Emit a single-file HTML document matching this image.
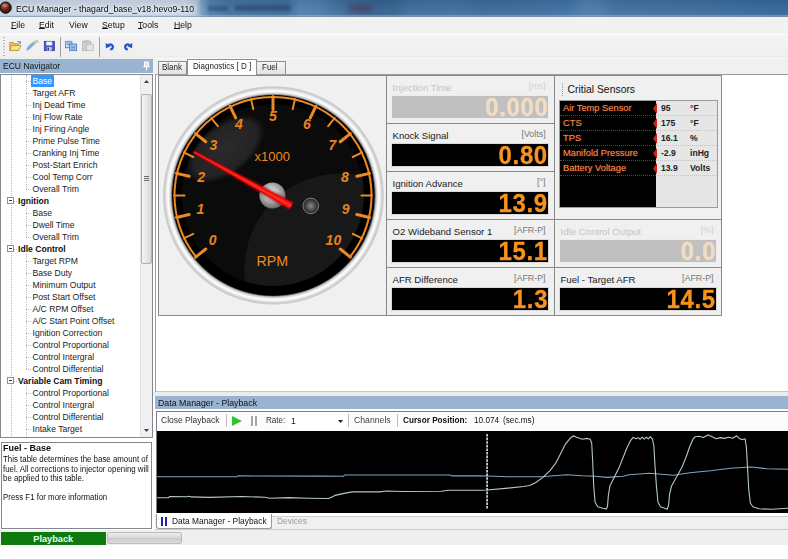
<!DOCTYPE html>
<html><head><meta charset="utf-8"><title>ECU Manager</title>
<style>
*{box-sizing:border-box;margin:0;padding:0}
html,body{width:788px;height:559px;overflow:hidden;background:#fff}
body{font-family:"Liberation Sans",sans-serif;font-size:8.8px;color:#111;position:relative}
.a{position:absolute}
.t{position:absolute;white-space:nowrap;line-height:1}
u{text-decoration:underline;text-underline-offset:.3px}
.sx{transform:scaleX(.93);transform-origin:0 50%}
#title{left:0;top:0;width:788px;height:17px;background:linear-gradient(180deg,rgba(0,0,0,.06),rgba(255,255,255,.07)),linear-gradient(90deg,#c4d2e5 0,#cad6e7 60px,#c8d4e6 185px,#b4c6dd 196px,#7a9cc3 202px,#4f7eaf 210px,#42719f 230px,#3d6c9b 285px,#4f80ae 300px,#4d7dab 320px,#41709f 335px,#3a6897 350px,#33618f 376px,#35638f 395px,#3d6d9d 410px,#3f70a1 456px,#3a6a9b 480px,#3e70a2 565px,#4c7cab 585px,#4a7aaa 600px,#4070a1 615px,#3c6d9e 700px,#33659a 788px)}
#title:after{content:"";position:absolute;left:0;right:0;bottom:0;height:2px;background:linear-gradient(180deg,rgba(255,255,255,.25),rgba(120,140,165,.9))}
#menubar{left:0;top:17px;width:788px;height:16px;background:#f1f1f1}
#toolbar{left:0;top:33px;width:788px;height:26px;background:linear-gradient(180deg,#f4f4f4,#eee)}
.sep{position:absolute;width:1px;background:#a0a0a0}
#navhead{left:0;top:59px;width:153px;height:14px;background:#99b4d1}
#tree{left:0;top:74px;width:153px;height:364px;background:#fff;border:1px solid #828790;overflow:hidden}
.ti{position:absolute;white-space:nowrap;line-height:12px;height:12px;font-size:8.600px;color:#222}
.ti.c{left:31.500px}
.ti.g{left:17px;font-weight:bold;color:#111}
.vd{position:absolute;width:0;border-left:1px dotted #b8b8b8}
.hd{position:absolute;height:0;border-top:1px dotted #b8b8b8}
.bx{position:absolute;left:6px;width:7px;height:7px;border:1px solid #919191;background:#fff}
.bx:after{content:"";position:absolute;left:1px;top:2px;width:3px;height:1px;background:#333}
#desc{left:1px;top:442px;width:151px;height:87px;background:#fff;border:1px solid #828790;font-size:8.480px;line-height:9.550px;color:#111;padding:1.600px 0 0 1px;white-space:nowrap;overflow:hidden}
#status{left:0;top:530px;width:788px;height:14.800px;background:#f0efee}
#tabstrip{left:153px;top:59px;width:635px;height:16px;background:#f0f0f0}
.tab{position:absolute;border:1px solid #8e8e8e;border-bottom:none;background:linear-gradient(180deg,#f4f4f4,#e2e2e2);font-size:8.600px;text-align:center;white-space:nowrap;color:#222}
.nx{display:inline-block;transform:scaleX(.93);transform-origin:0 50%}
#tabbody{left:155px;top:74px;width:640px;height:318px;background:#fff;border:1px solid #9a9ca0;border-bottom-color:#c4c4c4}
#dm{left:155px;top:396px;width:633px;height:133px}
.pnl{position:absolute;background:#f0f0f0;border:1px solid #888}
.lbl{position:absolute;white-space:nowrap;font-size:9.600px;line-height:1;color:#1a1a1a}
.unit{position:absolute;white-space:nowrap;font-size:8.900px;line-height:1;color:#777;text-align:right}
.bar{position:absolute;height:24px;background:#000;border:1px solid #d8d8d8;color:#f7921e;font-weight:bold;font-size:25.200px;text-align:right;line-height:23px;overflow:hidden;padding-right:.5px}
.dg{display:inline-block;transform:scale(.95,1.05);transform-origin:100% 82%;letter-spacing:.7px;margin-right:-.7px;-webkit-text-stroke:.3px currentColor}
.dis .lbl{color:#c4c4c4}.dis .unit{color:#d2d2d2}
.dis .bar{background:#c0c0c0;color:#f3dcc3;border-color:#ececec}
.ic{transform:scale(.88)}
</style></head><body>
<div id="title" class="a">
<svg class="a" style="left:0;top:0" width="17" height="17" viewBox="0 0 17 17"><defs><radialGradient id="ig" cx="40%" cy="35%" r="65%"><stop offset="0" stop-color="#b5604a"/><stop offset=".5" stop-color="#6b2a1e"/><stop offset="1" stop-color="#2a0f0b"/></radialGradient></defs><circle cx="5.600" cy="7.6" r="5.800" fill="url(#ig)"/><circle cx="5.600" cy="7.6" r="5.600" fill="none" stroke="#1c0c0a" stroke-width="1"/><ellipse cx="5" cy="5.400" rx="2.800" ry="1.600" fill="#e0a890" opacity=".45"/></svg>
<div class="a" style="left:208px;top:6px;width:20px;height:5px;background:rgba(20,45,80,.4);filter:blur(1.500px)"></div><div class="a" style="left:235px;top:5px;width:56px;height:6px;background:rgba(20,45,80,.4);filter:blur(1.500px)"></div><div class="a" style="left:349px;top:4px;width:23px;height:9px;background:rgba(85,35,60,.38);filter:blur(2.500px)"></div>
<span class="t sx" style="left:16.2px;top:4px;font-size:9.400px;color:#0a0a0a;text-shadow:0 0 4px #fff,0 0 6px #fff">ECU Manager - thagard_base_v18.hevo9-110</span>
</div>
<div id="menubar" class="a">
<span class="t sx" style="left:11.4px;top:4.1px;font-size:9.350px"><u>F</u>ile</span>
<span class="t sx" style="left:39.3px;top:4.1px;font-size:9.350px"><u>E</u>dit</span>
<span class="t sx" style="left:68.5px;top:4.1px;font-size:9.350px">View</span>
<span class="t sx" style="left:101.5px;top:4.1px;font-size:9.350px"><u>S</u>etup</span>
<span class="t sx" style="left:138.3px;top:4.1px;font-size:9.350px"><u>T</u>ools</span>
<span class="t sx" style="left:174.4px;top:4.1px;font-size:9.350px"><u>H</u>elp</span>
</div>
<div id="toolbar" class="a">
<div class="a" style="left:3px;top:4px;width:2px;height:19px;background:repeating-linear-gradient(180deg,#b5b5b5 0 1px,transparent 1px 3px)"></div>
<svg class="a ic" style="left:8px;top:6px" width="15" height="13" viewBox="0 0 15 13"><path d="M1 3h4l1 1.5h5v7.5H1z" fill="#e9c45a" stroke="#a98420" stroke-width=".8"/><path d="M3.2 6.5h10.5l-2.5 5.5H1z" fill="#fbe38a" stroke="#b08a25" stroke-width=".8"/><path d="M9 2.2c1.5-1.5 3.3-1 4 .3l.8-.6-.2 2.5-2.4-.6.9-.6c-.6-.9-1.800-1.100-2.700-.4z" fill="#3a76c4"/></svg>
<svg class="a ic" style="left:25px;top:6px" width="15" height="13" viewBox="0 0 15 13"><path d="M1 12c.5-3 2-5.500 5-7.500l3-1.500 1 1.500-2.500 2.500C5.500 9.500 3.500 11 1 12z" fill="#8fb0d8" stroke="#5f7fa8" stroke-width=".6"/><path d="M8 2.500l4.500-1.800 1.500 1.300-4.500 2.500z" fill="#e6d38a" stroke="#9a8a4a" stroke-width=".5"/></svg>
<svg class="a ic" style="left:43px;top:7px" width="13" height="12" viewBox="0 0 13 12"><rect x=".5" y=".5" width="11.500" height="11" fill="#4a58c8" stroke="#2a3290" stroke-width=".9"/><rect x="2.800" y="1" width="6.800" height="4.300" fill="#f2f2fa"/><rect x="3.500" y="7.300" width="5.500" height="4" fill="#c9cde8"/><rect x="4.300" y="8" width="1.600" height="2.800" fill="#2a3290"/></svg>
<div class="sep" style="left:60px;top:4px;height:20px"></div>
<svg class="a ic" style="left:64px;top:7px" width="14" height="12" viewBox="0 0 14 12"><rect x=".5" y=".5" width="7.500" height="7.500" fill="#c9dcf4" stroke="#4f7cc0" stroke-width="1"/><path d="M2 2.500h4.500M2 4.200h4.500" stroke="#5d8ad0" stroke-width=".9"/><rect x="5.500" y="3.800" width="7.800" height="7.700" fill="#bcd4f2" stroke="#3f6fb8" stroke-width="1"/><path d="M7 6.200h4.800M7 7.900h4.800M7 9.600h4.800" stroke="#4a7ccc" stroke-width=".9"/></svg>
<svg class="a ic" style="left:81px;top:6px" width="14" height="13" viewBox="0 0 14 13"><rect x=".7" y="1.700" width="9.500" height="10.500" fill="#cfcfcf" stroke="#b4b4b4" stroke-width=".9"/><rect x="3" y=".5" width="5" height="2.500" fill="#bdbdbd"/><rect x="5.500" y="5" width="7.500" height="7.500" fill="#e4e4e4" stroke="#b9b9b9" stroke-width=".9"/></svg>
<div class="sep" style="left:99px;top:4px;height:20px"></div>
<svg class="a" style="left:105px;top:8px;transform:scale(.92)" width="10" height="10" viewBox="0 0 10 10"><path d="M2.800 4.600C4.200 2.600 7 2.700 7.900 4.900 8.600 6.900 7.400 8.600 5.200 9.100" fill="none" stroke="#2553c4" stroke-width="2.500"/><path d="M0 1.500l.5 6 5.300-2.300z" fill="#2553c4"/></svg>
<svg class="a ic" style="left:123px;top:8px;transform:scale(-.92,.92)" width="10" height="10" viewBox="0 0 10 10"><path d="M2.800 4.600C4.200 2.600 7 2.700 7.900 4.900 8.600 6.900 7.400 8.600 5.200 9.100" fill="none" stroke="#2553c4" stroke-width="2.500"/><path d="M0 1.500l.5 6 5.300-2.300z" fill="#2553c4"/></svg>
</div>
<div class="a" style="left:0;top:33.500px;width:788px;height:1px;background:#fbfbfb"></div><div class="a" style="left:153px;top:58px;width:635px;height:1px;background:#fafafa"></div>
<div id="tabstrip" class="a">
<div class="tab" style="left:4.500px;top:2px;width:29.500px;height:13px;line-height:11.500px;text-align:left;padding-left:3.500px"><span class="nx">Blank</span></div>
<div class="tab" style="left:103px;top:2px;width:30px;height:13px;line-height:11.500px;text-align:left;padding-left:4.500px"><span class="nx">Fuel</span></div>
<div class="tab" style="left:33.500px;top:0px;width:70.500px;height:16px;line-height:13.500px;background:#fff;z-index:3;text-align:left;padding-left:5.500px"><span class="nx">Diagnostics [ D ]</span></div>
</div>
<div id="navhead" class="a"><span class="t sx" style="left:2.6px;top:3.4px;font-size:9.200px;color:#111">ECU Navigator</span>
<svg class="a" style="left:143px;top:2px" width="7" height="10" viewBox="0 0 7 10"><path d="M1.500 1h4v4.500h-4zM0.300 5.800h6.400M3.500 6v3.500" fill="#d9e6f5" stroke="#fff" stroke-width="1.100"/></svg></div>
<div id="tree" class="a">
<div class="vd" style="left:9.7px;top:0;height:365px"></div>
<div class="vd" style="left:24.5px;top:0px;height:113.6px"></div>
<div class="vd" style="left:24.5px;top:130.6px;height:31.0px"></div>
<div class="vd" style="left:24.5px;top:178.6px;height:115.00000000000003px"></div>
<div class="vd" style="left:24.5px;top:310.6px;height:55.0px"></div>
<div class="hd" style="left:25px;top:5.599999999999994px;width:5px"></div>
<div class="a" style="left:29.5px;top:-0.4000000000000057px;width:23px;height:12px;background:#3399ff"></div>
<div class="ti c" style="top:-0.4px;color:#fff">Base</div>
<div class="hd" style="left:25px;top:17.599999999999994px;width:5px"></div>
<div class="ti c" style="top:11.6px">Target AFR</div>
<div class="hd" style="left:25px;top:29.599999999999994px;width:5px"></div>
<div class="ti c" style="top:23.6px">Inj Dead Time</div>
<div class="hd" style="left:25px;top:41.599999999999994px;width:5px"></div>
<div class="ti c" style="top:35.6px">Inj Flow Rate</div>
<div class="hd" style="left:25px;top:53.599999999999994px;width:5px"></div>
<div class="ti c" style="top:47.6px">Inj Firing Angle</div>
<div class="hd" style="left:25px;top:65.6px;width:5px"></div>
<div class="ti c" style="top:59.6px">Prime Pulse Time</div>
<div class="hd" style="left:25px;top:77.6px;width:5px"></div>
<div class="ti c" style="top:71.6px">Cranking Inj Time</div>
<div class="hd" style="left:25px;top:89.6px;width:5px"></div>
<div class="ti c" style="top:83.6px">Post-Start Enrich</div>
<div class="hd" style="left:25px;top:101.6px;width:5px"></div>
<div class="ti c" style="top:95.6px">Cool Temp Corr</div>
<div class="hd" style="left:25px;top:113.6px;width:5px"></div>
<div class="ti c" style="top:107.6px">Overall Trim</div>
<div class="bx" style="top:122.1px"></div>
<div class="hd" style="left:13px;top:125.6px;width:3px"></div>
<div class="ti g" style="top:119.6px">Ignition</div>
<div class="hd" style="left:25px;top:137.6px;width:5px"></div>
<div class="ti c" style="top:131.6px">Base</div>
<div class="hd" style="left:25px;top:149.6px;width:5px"></div>
<div class="ti c" style="top:143.6px">Dwell Time</div>
<div class="hd" style="left:25px;top:161.6px;width:5px"></div>
<div class="ti c" style="top:155.6px">Overall Trim</div>
<div class="bx" style="top:170.1px"></div>
<div class="hd" style="left:13px;top:173.6px;width:3px"></div>
<div class="ti g" style="top:167.6px">Idle Control</div>
<div class="hd" style="left:25px;top:185.6px;width:5px"></div>
<div class="ti c" style="top:179.6px">Target RPM</div>
<div class="hd" style="left:25px;top:197.60000000000002px;width:5px"></div>
<div class="ti c" style="top:191.6px">Base Duty</div>
<div class="hd" style="left:25px;top:209.60000000000002px;width:5px"></div>
<div class="ti c" style="top:203.6px">Minimum Output</div>
<div class="hd" style="left:25px;top:221.60000000000002px;width:5px"></div>
<div class="ti c" style="top:215.6px">Post Start Offset</div>
<div class="hd" style="left:25px;top:233.60000000000002px;width:5px"></div>
<div class="ti c" style="top:227.6px">A/C RPM Offset</div>
<div class="hd" style="left:25px;top:245.60000000000002px;width:5px"></div>
<div class="ti c" style="top:239.6px">A/C Start Point Offset</div>
<div class="hd" style="left:25px;top:257.6px;width:5px"></div>
<div class="ti c" style="top:251.6px">Ignition Correction</div>
<div class="hd" style="left:25px;top:269.6px;width:5px"></div>
<div class="ti c" style="top:263.6px">Control Proportional</div>
<div class="hd" style="left:25px;top:281.6px;width:5px"></div>
<div class="ti c" style="top:275.6px">Control Intergral</div>
<div class="hd" style="left:25px;top:293.6px;width:5px"></div>
<div class="ti c" style="top:287.6px">Control Differential</div>
<div class="bx" style="top:302.1px"></div>
<div class="hd" style="left:13px;top:305.6px;width:3px"></div>
<div class="ti g" style="top:299.6px">Variable Cam Timing</div>
<div class="hd" style="left:25px;top:317.6px;width:5px"></div>
<div class="ti c" style="top:311.6px">Control Proportional</div>
<div class="hd" style="left:25px;top:329.6px;width:5px"></div>
<div class="ti c" style="top:323.6px">Control Intergral</div>
<div class="hd" style="left:25px;top:341.6px;width:5px"></div>
<div class="ti c" style="top:335.6px">Control Differential</div>
<div class="hd" style="left:25px;top:353.6px;width:5px"></div>
<div class="ti c" style="top:347.6px">Intake Target</div>
<div class="hd" style="left:25px;top:365.6px;width:5px"></div>
<div class="ti c" style="top:359.6px">Exhaust Target</div>
<div class="a" style="left:139px;top:0;width:12px;height:363px;background:#f0f0f0;border-left:1px solid #e3e3e3"></div>
<div class="a" style="left:139.500px;top:19px;width:11.500px;height:170px;border:1px solid #b2b2b2;border-radius:2px;background:linear-gradient(90deg,#f4f4f4,#e8e8e8 50%,#d6d6d6)"></div>
<div class="a" style="left:143px;top:101px;width:5px;height:5px;background:repeating-linear-gradient(180deg,#6a6a6a 0 1px,transparent 1px 2px)"></div>
<svg class="a" style="left:142.500px;top:5px" width="5" height="3" viewBox="0 0 5 3"><path d="M0 3L2.500 0 5 3z" fill="#404040"/></svg>
<svg class="a" style="left:142.500px;top:354px" width="5" height="3" viewBox="0 0 5 3"><path d="M0 0L2.500 3 5 0z" fill="#404040"/></svg>
</div>
<div id="desc" class="a"><div class="nx"><b style="font-size:9.7px;position:relative;top:-1.300px">Fuel - Base</b><br>This table determines the base amount of<br>fuel. All corrections to injector opening will<br>be applied to this table.<br><br>Press F1 for more information</div></div>
<div id="tabbody" class="a">
<div class="pnl" style="left:2px;top:0px;width:229px;height:241px"></div>
<div class="a" style="left:-8.4px;top:-4.6px;width:250px;height:250px"><svg width="250" height="250" viewBox="0 0 250 250"><defs><radialGradient id="bz" cx="50%" cy="50%" r="50%"><stop offset="0.908" stop-color="#000"/><stop offset="0.915" stop-color="#5a5a5a"/><stop offset="0.925" stop-color="#c4c4c4"/><stop offset="0.946" stop-color="#fdfdfd"/><stop offset="0.960" stop-color="#f4f4f4"/><stop offset="0.978" stop-color="#cfcfcf"/><stop offset="0.990" stop-color="#c2c2c2" stop-opacity=".8"/><stop offset="1" stop-color="#d8d8d8" stop-opacity="0"/></radialGradient><linearGradient id="bzs" x1="0" y1="0" x2="1" y2="1"><stop offset="0" stop-color="#fff" stop-opacity=".5"/><stop offset=".5" stop-color="#999" stop-opacity=".25"/><stop offset="1" stop-color="#fff" stop-opacity=".5"/></linearGradient><radialGradient id="hub" cx="45%" cy="40%" r="60%"><stop offset="0" stop-color="#f1f1f1"/><stop offset=".5" stop-color="#b4b4b4"/><stop offset="1" stop-color="#6a6a6a"/></radialGradient><radialGradient id="led" cx="50%" cy="50%" r="50%"><stop offset="0" stop-color="#8c8c8c"/><stop offset=".7" stop-color="#3e3e3e"/><stop offset="1" stop-color="#222"/></radialGradient><radialGradient id="g1" cx="50%" cy="50%" r="50%"><stop offset="0" stop-color="#fff" stop-opacity=".13"/><stop offset=".8" stop-color="#fff" stop-opacity=".1"/><stop offset="1" stop-color="#fff" stop-opacity="0"/></radialGradient><clipPath id="fc"><circle cx="125" cy="125" r="91"/></clipPath><filter id="gl" x="-20%" y="-20%" width="140%" height="140%"><feGaussianBlur stdDeviation="1.3"/></filter></defs><ellipse cx="125.4" cy="125.4" rx="111" ry="109.800" fill="url(#bz)"/><ellipse cx="125.4" cy="125.4" rx="100.800" ry="100.100" fill="#000"/><circle cx="125" cy="125" r="91" fill="#0b0b0b"/><g clip-path="url(#fc)"><circle cx="192.4" cy="199.6" r="96" fill="#fff" opacity=".055"/><ellipse cx="77.4" cy="79.1" rx="46" ry="25" transform="rotate(-38 77.4 79.1)" fill="url(#g1)"/></g><path d="M48.85 187.88A98.5 98.5 0 1 1 201.15 187.88" fill="none" stroke="#ee8a22" stroke-width="2"/><path d="M47.60 187.13L57.76 179.02" stroke="#ee8a22" stroke-width="3" stroke-linecap="round"/><path d="M35.80 168.35L45.26 163.80" stroke="#ee8a22" stroke-width="2" stroke-linecap="round"/><path d="M28.48 147.43L41.16 144.54" stroke="#ee8a22" stroke-width="3" stroke-linecap="round"/><path d="M26.00 125.40L36.50 125.40" stroke="#ee8a22" stroke-width="2" stroke-linecap="round"/><path d="M28.48 103.37L41.16 106.26" stroke="#ee8a22" stroke-width="3" stroke-linecap="round"/><path d="M35.80 82.45L45.26 87.00" stroke="#ee8a22" stroke-width="2" stroke-linecap="round"/><path d="M47.60 63.67L57.76 71.78" stroke="#ee8a22" stroke-width="3" stroke-linecap="round"/><path d="M63.27 48.00L69.82 56.21" stroke="#ee8a22" stroke-width="2" stroke-linecap="round"/><path d="M82.05 36.20L87.69 47.92" stroke="#ee8a22" stroke-width="3" stroke-linecap="round"/><path d="M102.97 28.88L105.31 39.12" stroke="#ee8a22" stroke-width="2" stroke-linecap="round"/><path d="M125.00 26.40L125.00 39.40" stroke="#ee8a22" stroke-width="3" stroke-linecap="round"/><path d="M147.03 28.88L144.69 39.12" stroke="#ee8a22" stroke-width="2" stroke-linecap="round"/><path d="M167.95 36.20L162.31 47.92" stroke="#ee8a22" stroke-width="3" stroke-linecap="round"/><path d="M186.73 48.00L180.18 56.21" stroke="#ee8a22" stroke-width="2" stroke-linecap="round"/><path d="M202.40 63.67L192.24 71.78" stroke="#ee8a22" stroke-width="3" stroke-linecap="round"/><path d="M214.20 82.45L204.74 87.00" stroke="#ee8a22" stroke-width="2" stroke-linecap="round"/><path d="M221.52 103.37L208.84 106.26" stroke="#ee8a22" stroke-width="3" stroke-linecap="round"/><path d="M224.00 125.40L213.50 125.40" stroke="#ee8a22" stroke-width="2" stroke-linecap="round"/><path d="M221.52 147.43L208.84 144.54" stroke="#ee8a22" stroke-width="3" stroke-linecap="round"/><path d="M214.20 168.35L204.74 163.80" stroke="#ee8a22" stroke-width="2" stroke-linecap="round"/><path d="M202.40 187.13L192.24 179.02" stroke="#ee8a22" stroke-width="3" stroke-linecap="round"/><text x="64.6" y="175.0" text-anchor="middle" font-family="Liberation Sans, sans-serif" font-size="14" font-weight="bold" font-style="italic" fill="#e8841c">0</text><text x="52.3" y="144.1" text-anchor="middle" font-family="Liberation Sans, sans-serif" font-size="14" font-weight="bold" font-style="italic" fill="#e8841c">1</text><text x="53.2" y="112.0" text-anchor="middle" font-family="Liberation Sans, sans-serif" font-size="14" font-weight="bold" font-style="italic" fill="#e8841c">2</text><text x="65.5" y="80.4" text-anchor="middle" font-family="Liberation Sans, sans-serif" font-size="14" font-weight="bold" font-style="italic" fill="#e8841c">3</text><text x="91.0" y="59.0" text-anchor="middle" font-family="Liberation Sans, sans-serif" font-size="14" font-weight="bold" font-style="italic" fill="#e8841c">4</text><text x="125.0" y="50.7" text-anchor="middle" font-family="Liberation Sans, sans-serif" font-size="14" font-weight="bold" font-style="italic" fill="#e8841c">5</text><text x="159.0" y="59.0" text-anchor="middle" font-family="Liberation Sans, sans-serif" font-size="14" font-weight="bold" font-style="italic" fill="#e8841c">6</text><text x="184.5" y="80.4" text-anchor="middle" font-family="Liberation Sans, sans-serif" font-size="14" font-weight="bold" font-style="italic" fill="#e8841c">7</text><text x="196.8" y="112.0" text-anchor="middle" font-family="Liberation Sans, sans-serif" font-size="14" font-weight="bold" font-style="italic" fill="#e8841c">8</text><text x="197.7" y="144.1" text-anchor="middle" font-family="Liberation Sans, sans-serif" font-size="14" font-weight="bold" font-style="italic" fill="#e8841c">9</text><text x="185.4" y="175.0" text-anchor="middle" font-family="Liberation Sans, sans-serif" font-size="14" font-weight="bold" font-style="italic" fill="#e8841c">10</text><text x="124.2" y="91" text-anchor="middle" font-family="Liberation Sans, sans-serif" font-size="13" fill="#ee8a22">x1000</text><text x="124.2" y="195.8" text-anchor="middle" font-family="Liberation Sans, sans-serif" font-size="14.200" fill="#ee8a22">RPM</text><circle cx="162.8" cy="135.9" r="7.800" fill="url(#led)" stroke="#808080" stroke-width="1"/><circle cx="124.4" cy="125.5" r="13" fill="url(#hub)"/><path d="M44.82 83.20L141.07 140.02L145.53 131.98L46.38 80.40z" fill="#a80000" opacity=".7" filter="url(#gl)"/><path d="M45.11 82.67L141.70 138.89L144.90 133.11L46.09 80.93z" fill="#ee0808"/><path d="M45.45 82.06L142.62 137.22L143.98 134.78L45.75 81.54z" fill="#ff4a3a" opacity=".6"/></svg></div>
<div class="pnl dis" style="left:230px;top:0px;width:169px;height:49px"><span class="lbl" style="left:5.5px;top:6.5px">Injection Time</span><span class="unit" style="left:98.6px;width:60px;top:6px">[ms]</span><div class="bar" style="left:4px;top:18.6px;width:158px"><span class="dg">0.000</span></div></div>
<div class="pnl" style="left:230px;top:48px;width:169px;height:49px"><span class="lbl" style="left:5.5px;top:6.5px">Knock Signal</span><span class="unit" style="left:98.6px;width:60px;top:6px">[Volts]</span><div class="bar" style="left:4px;top:18.6px;width:158px"><span class="dg">0.80</span></div></div>
<div class="pnl" style="left:230px;top:96px;width:169px;height:49px"><span class="lbl" style="left:5.5px;top:6.5px">Ignition Advance</span><span class="unit" style="left:98.6px;width:60px;top:6px">[°]</span><div class="bar" style="left:4px;top:18.6px;width:158px"><span class="dg">13.9</span></div></div>
<div class="pnl" style="left:230px;top:144px;width:169px;height:49px"><span class="lbl" style="left:5.5px;top:6.5px">O2 Wideband Sensor 1</span><span class="unit" style="left:98.6px;width:60px;top:6px">[AFR-P]</span><div class="bar" style="left:4px;top:18.6px;width:158px"><span class="dg">15.1</span></div></div>
<div class="pnl" style="left:230px;top:192px;width:169px;height:49px"><span class="lbl" style="left:5.5px;top:6.5px">AFR Difference</span><span class="unit" style="left:98.6px;width:60px;top:6px">[AFR-P]</span><div class="bar" style="left:4px;top:18.6px;width:158px"><span class="dg">1.3</span></div></div>
<div class="pnl" style="left:398px;top:0px;width:168px;height:145px">
<div class="a" style="left:7px;top:7px;width:1px;height:13px;background:repeating-linear-gradient(180deg,#9a9a9a 0 1px,transparent 1px 2px)"></div>
<span class="lbl" style="left:12.5px;top:9px;font-size:10.4px;color:#111">Critial Sensors</span>
<div class="a" style="left:4px;top:23.5px;width:159px;height:108px;border:1px solid #9b9b9b;background:linear-gradient(90deg,#000 0,#000 96px,#e6e6e6 96px)">
<div class="a" style="left:0;top:0.0px;width:157px;height:15.1px"><div class="a" style="left:0;bottom:0;width:96px;border-bottom:1px dotted #4a4a4a"></div><div class="a" style="left:96px;bottom:0;width:61px;border-bottom:1px dotted #c4c4c4"></div><span class="t" style="left:3px;top:3px;font-size:9.3px;color:#ef8b3a;text-shadow:0 0 1px #a33">Air Temp Sensor</span><svg class="a" style="left:93px;top:2px" width="4" height="11" viewBox="0 0 4 11"><path d="M4 0L0 5.500 4 11z" fill="#d0201a"/></svg><span class="t" style="left:101px;top:3.5px;font-size:8.6px;font-weight:bold;color:#222">95</span><span class="t" style="left:130px;top:3.5px;font-size:8.6px;font-weight:bold;color:#222">°F</span></div>
<div class="a" style="left:0;top:15.1px;width:157px;height:15.1px"><div class="a" style="left:0;bottom:0;width:96px;border-bottom:1px dotted #4a4a4a"></div><div class="a" style="left:96px;bottom:0;width:61px;border-bottom:1px dotted #c4c4c4"></div><span class="t" style="left:3px;top:3px;font-size:9.3px;color:#ef8b3a;text-shadow:0 0 1px #a33">CTS</span><svg class="a" style="left:93px;top:2px" width="4" height="11" viewBox="0 0 4 11"><path d="M4 0L0 5.500 4 11z" fill="#d0201a"/></svg><span class="t" style="left:101px;top:3.5px;font-size:8.6px;font-weight:bold;color:#222">175</span><span class="t" style="left:130px;top:3.5px;font-size:8.6px;font-weight:bold;color:#222">°F</span></div>
<div class="a" style="left:0;top:30.2px;width:157px;height:15.1px"><div class="a" style="left:0;bottom:0;width:96px;border-bottom:1px dotted #4a4a4a"></div><div class="a" style="left:96px;bottom:0;width:61px;border-bottom:1px dotted #c4c4c4"></div><span class="t" style="left:3px;top:3px;font-size:9.3px;color:#ef8b3a;text-shadow:0 0 1px #a33">TPS</span><svg class="a" style="left:93px;top:2px" width="4" height="11" viewBox="0 0 4 11"><path d="M4 0L0 5.500 4 11z" fill="#d0201a"/></svg><span class="t" style="left:101px;top:3.5px;font-size:8.6px;font-weight:bold;color:#222">16.1</span><span class="t" style="left:130px;top:3.5px;font-size:8.6px;font-weight:bold;color:#222">%</span></div>
<div class="a" style="left:0;top:45.3px;width:157px;height:15.1px"><div class="a" style="left:0;bottom:0;width:96px;border-bottom:1px dotted #4a4a4a"></div><div class="a" style="left:96px;bottom:0;width:61px;border-bottom:1px dotted #c4c4c4"></div><span class="t" style="left:3px;top:3px;font-size:9.3px;color:#ef8b3a;text-shadow:0 0 1px #a33">Manifold Pressure</span><svg class="a" style="left:93px;top:2px" width="4" height="11" viewBox="0 0 4 11"><path d="M4 0L0 5.500 4 11z" fill="#d0201a"/></svg><span class="t" style="left:101px;top:3.5px;font-size:8.6px;font-weight:bold;color:#222">-2.9</span><span class="t" style="left:130px;top:3.5px;font-size:8.6px;font-weight:bold;color:#222">inHg</span></div>
<div class="a" style="left:0;top:60.4px;width:157px;height:15.1px"><div class="a" style="left:0;bottom:0;width:96px;border-bottom:1px dotted #4a4a4a"></div><div class="a" style="left:96px;bottom:0;width:61px;border-bottom:1px dotted #c4c4c4"></div><span class="t" style="left:3px;top:3px;font-size:9.3px;color:#ef8b3a;text-shadow:0 0 1px #a33">Battery Voltage</span><svg class="a" style="left:93px;top:2px" width="4" height="11" viewBox="0 0 4 11"><path d="M4 0L0 5.500 4 11z" fill="#d0201a"/></svg><span class="t" style="left:101px;top:3.5px;font-size:8.6px;font-weight:bold;color:#222">13.9</span><span class="t" style="left:130px;top:3.5px;font-size:8.6px;font-weight:bold;color:#222">Volts</span></div>
</div></div>
<div class="pnl dis" style="left:398px;top:144px;width:168px;height:49px"><span class="lbl" style="left:5.5px;top:6.5px">Idle Control Output</span><span class="unit" style="left:98.6px;width:60px;top:6px">[%]</span><div class="bar" style="left:4px;top:18.6px;width:158px"><span class="dg">0.0</span></div></div>
<div class="pnl" style="left:398px;top:192px;width:168px;height:49px"><span class="lbl" style="left:5.5px;top:6.5px">Fuel - Target AFR</span><span class="unit" style="left:98.6px;width:60px;top:6px">[AFR-P]</span><div class="bar" style="left:4px;top:18.6px;width:158px"><span class="dg">14.5</span></div></div>
</div>
<div class="a" style="left:153px;top:392px;width:635px;height:4px;background:#ececec"></div>
<div id="dm" class="a">
<div class="a" style="left:0;top:0;width:633px;height:13px;background:#99b4d1"><span class="t sx" style="left:3px;top:2.1px;font-size:9.450px;color:#111">Data Manager - Playback</span></div>
<div class="a" style="left:0;top:13px;width:633px;height:2px;background:#fff"></div><div class="a" style="left:1px;top:14.5px;width:632px;height:21px;background:#fcfcfc;border:1px solid #7c7e84;border-right:none;border-bottom:none"></div>
<span class="t sx" style="left:5.7px;top:20.2px;font-size:9.14px;color:#333">Close Playback</span>
<div class="sep" style="left:71px;top:18px;height:13px;background:#bdbdbd"></div>
<svg class="a" style="left:76.5px;top:19.5px" width="10" height="10" viewBox="0 0 10 10"><path d="M0 0L10 5 0 10z" fill="#2fc42f"/></svg>
<div class="a" style="left:95.8px;top:19.8px;width:2.600px;height:10px;background:#a6a6a6"></div><div class="a" style="left:99.8px;top:19.8px;width:2.600px;height:10px;background:#a6a6a6"></div>
<span class="t sx" style="left:110.5px;top:20.3px;font-size:8.71px;color:#333">Rate:</span>
<div class="a" style="left:133px;top:16px;width:58px;height:17px;background:#fff"></div>
<span class="t sx" style="left:136.0px;top:20.6px;font-size:9.35px;">1</span>
<svg class="a" style="left:183px;top:24px" width="5" height="3" viewBox="0 0 5 3"><path d="M0 0L2.500 3 5 0z" fill="#222"/></svg>
<div class="sep" style="left:193px;top:18px;height:13px;background:#bdbdbd"></div>
<span class="t sx" style="left:199.3px;top:20.1px;font-size:9.35px;color:#444">Channels</span>
<div class="sep" style="left:242px;top:18px;height:13px;background:#bdbdbd"></div>
<span class="t sx" style="left:247.6px;top:20.1px;font-size:8.82px;font-weight:bold">Cursor Position:</span>
<span class="t sx" style="left:318.7px;top:20.3px;font-size:8.82px;">10.074</span>
<span class="t sx" style="left:347.9px;top:20.3px;font-size:8.82px;">(sec.ms)</span>
<div class="a" style="left:1px;top:35px;width:632px;height:82.300px;background:#000;overflow:hidden;border-left:1px solid #7c7e84"><svg width="632" height="83" viewBox="0 0 632 83"><path d="M0.0 45.8L80.0 45.8L81.0 44.9L164.0 45.1L186.5 45.2L187.5 44.0L293.0 44.0L294.5 44.9L324.0 44.8L350.4 45.8L384.9 45.8L409.3 43.7L425.5 44.8L437.7 45.2L449.9 46.4L466.1 45.2L472.0 43.7L492.3 42.3L504.5 43.3L516.7 44.2L532.9 41.7L553.2 39.7L573.5 37.2L593.8 36.0L610.1 37.7L632.0 38.3" fill="none" stroke="#7fa5c0" stroke-width="1.100" stroke-linejoin="round"/><path d="M0.0 66.7L11.5 66.7L12.5 65.6L30.0 65.7L32.0 65.2L34.0 65.9L52.0 66.4L84.6 65.5L108.0 66.2L112.7 67.3L132.0 66.6L151.5 67.2L171.8 67.5L178.0 64.4L188.3 62.1L195.1 60.9L222.5 60.9L229.4 60.0L245.4 60.5L284.2 60.2L291.0 59.3L324.0 59.3L330.0 59.0L348.4 57.4L366.6 55.5L372.7 54.5L378.8 51.5L385.9 46.4L393.0 39.7L399.1 31.6L404.2 21.4L408.3 13.3L413.3 7.2L416.4 4.8L419.4 6.2L425.5 8.2L429.6 7.4L433.2 8.2L434.7 12.3L435.7 30.5L436.7 54.9L438.1 71.2L440.8 75.8L445.8 77.2L449.5 77.9L450.5 75.2L451.3 65.1L452.9 54.9L456.0 48.8L462.1 36.6L466.1 26.5L470.2 16.3L473.2 10.2L476.1 6.4L479.1 7.8L481.1 6.6L483.2 8.2L485.2 6.2L487.2 8.2L489.3 6.2L491.3 7.8L493.3 5.6L495.4 8.2L496.8 14.3L498.0 34.6L499.4 54.9L501.0 71.2L503.5 75.8L507.5 77.2L510.2 78.3L511.6 74.2L512.6 63.0L514.6 54.9L519.7 45.8L524.8 36.6L528.9 26.5L532.9 15.3L536.0 8.2L538.0 5.8L542.0 5.2L546.1 6.6L551.2 3.9L555.2 5.8L559.3 7.8L563.4 6.6L567.4 7.4L571.5 6.2L575.6 7.2L579.6 4.8L582.7 7.8L585.7 8.6L588.1 7.8L589.4 16.3L590.4 34.6L591.8 59.0L593.4 72.2L595.9 75.8L601.9 77.7L614.1 78.3L632.0 77.2" fill="none" stroke="#b4c8c6" stroke-width="1.100" stroke-linejoin="round"/><path d="M330.1 3V78.5" stroke="#c4dde2" stroke-width="1.700" stroke-dasharray="2.6 1"/></svg></div>
<div class="a" style="left:0;top:117.3px;width:633px;height:3.700px;background:#fff;border-bottom:1px solid #cfcfcf"></div><div class="a" style="left:0;top:121px;width:633px;height:13px;background:#f0f0f0;border-bottom:1px solid #cdcdcd"></div>
<div class="a" style="left:116px;top:120px;width:40px;height:13px;border-left:1px solid #c9c9c9"></div>
<div class="a" style="left:0.5px;top:117.5px;width:116px;height:15.500px;background:#fff;border:1px solid #9a9a9a;border-top:none;border-radius:0 0 3px 3px"></div>
<div class="a" style="left:6.3px;top:120.6px;width:2px;height:9px;background:#2222b0"></div><div class="a" style="left:10.2px;top:120.6px;width:2px;height:9px;background:#2222b0"></div>
<span class="t sx" style="left:16.5px;top:120.8px;font-size:9.03px;">Data Manager - Playback</span>
<span class="t sx" style="left:121.7px;top:121.2px;font-size:9.03px;color:#9a9a9a">Devices</span>
</div>
<div id="status" class="a"><div class="a" style="left:1px;top:1.6px;width:104.5px;height:13px;background:#0e7a0e;color:#e9ffe9;font-weight:bold;font-size:9.2px;text-align:center;line-height:15px">Playback</div>
<div class="a" style="left:106.5px;top:2.2px;width:75px;height:12px;border:1px solid #bcbcbc;border-radius:2px;background:linear-gradient(180deg,#eee,#d6d6d6 50%,#c9c9c9 50%,#dcdcdc)"></div></div>
</body></html>
